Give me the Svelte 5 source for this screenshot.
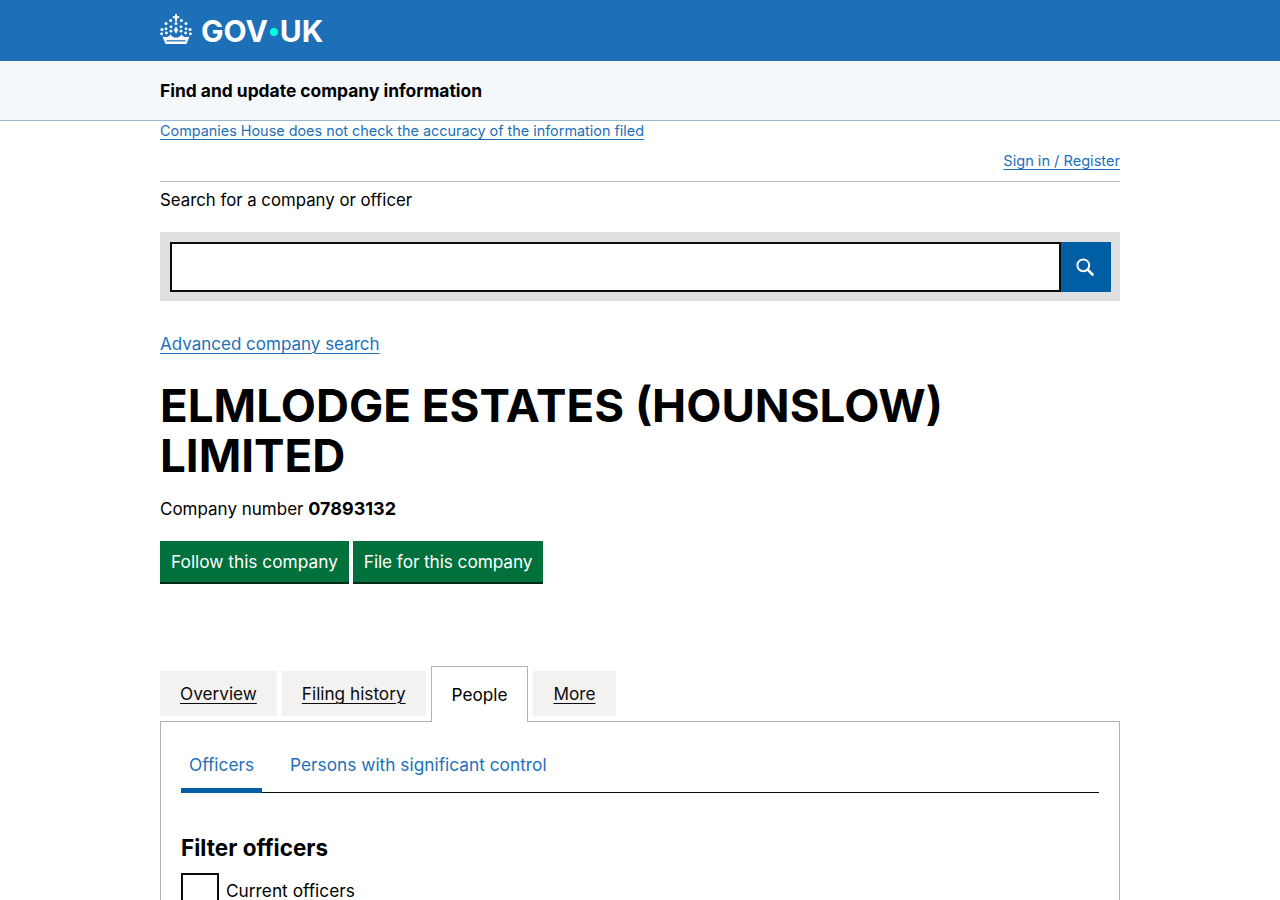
<script>
  const tabs = [
    { label: 'Overview', active: false },
    { label: 'Filing history', active: false },
    { label: 'People', active: true },
    { label: 'More', active: false }
  ];
</script>

<header class="top">
  <div class="wrap logo">
    <svg class="crown" viewBox="0 0 32 30" width="32" height="30" aria-hidden="true">
      <g fill="#fff">
        <path d="M15 0h2v2.200h2.200v2H17v3.200h-2V4.200h-2.200v-2H15z"/>
        <circle cx="16" cy="9.400" r="1.500"/>
        <circle cx="10.600" cy="6.400" r="1.500"/><circle cx="21.400" cy="6.400" r="1.500"/>
        <circle cx="6" cy="9.400" r="1.500"/><circle cx="26" cy="9.400" r="1.500"/>
        <circle cx="2" cy="15.600" r="1.500"/><circle cx="30" cy="15.600" r="1.500"/>
        <circle cx="1.600" cy="19.800" r="1.400"/><circle cx="30.400" cy="19.800" r="1.400"/>
        <circle cx="6" cy="14.800" r="1.400"/><circle cx="26" cy="14.800" r="1.400"/>
        <circle cx="6.400" cy="19" r="1.400"/><circle cx="25.600" cy="19" r="1.400"/>
        <circle cx="11" cy="12.800" r="1.400"/><circle cx="21" cy="12.800" r="1.400"/>
        <circle cx="11" cy="17.200" r="1.400"/><circle cx="21" cy="17.200" r="1.400"/>
        <path d="M16 12.500l2.200 3.200-2.200 4.200-2.200-4.200z"/>
        <path d="M2.500 22.500c3.600 1.400 6.500.3 8-2.300 1 2.500 3 3.300 5.500 3.300s4.500-.8 5.500-3.300c1.500 2.600 4.400 3.700 8 2.300l-3 7.500H5.500z"/>
      </g>
      <path d="M6.500 26.800h19" stroke="#1d70b8" stroke-width="1.200"/>
    </svg>
    <span class="wordmark">GOV<span class="dot"></span>UK</span>
  </div>
</header>

<div class="service">
  <div class="wrap service-name">Find and update company information</div>
</div>

<main class="wrap">
  <a class="link small notice" href="#accuracy">Companies House does not check the accuracy of the information filed</a>
  <nav class="account">
    <a class="link small signin" href="#signin">Sign in / Register</a>
  </nav>

  <form class="search-form" onsubmit={(e) => e.preventDefault()}>
    <label class="search-label" for="site-search">Search for a company or officer</label>
    <div class="search-box">
      <input id="site-search" class="search-input" type="search" />
      <button class="search-button" type="submit" aria-label="Search">
        <svg viewBox="0 0 18 18" width="18" height="18" aria-hidden="true">
          <circle cx="7.300" cy="7.300" r="5.900" fill="none" stroke="#fff" stroke-width="2"/>
          <path d="M11.700 11.700l4.800 4.800" stroke="#fff" stroke-width="2.600" stroke-linecap="round"/>
        </svg>
      </button>
    </div>
  </form>

  <a class="link advanced" href="#advanced">Advanced company search</a>

  <h1>ELMLODGE ESTATES (HOUNSLOW) LIMITED</h1>
  <p class="number">Company number <strong>07893132</strong></p>

  <div class="actions">
    <a class="btn" href="#follow">Follow this company</a>
    <a class="btn" href="#file">File for this company</a>
  </div>

  <ul class="tabs">
    {#each tabs as tab}
      <li class="tab" class:active={tab.active}>
        {#if tab.active}
          <span>{tab.label}</span>
        {:else}
          <a href="#tab">{tab.label}</a>
        {/if}
      </li>
    {/each}
  </ul>

  <section class="panel">
    <ul class="subnav">
      <li class="current"><a href="#officers">Officers</a></li>
      <li><a href="#psc">Persons with significant control</a></li>
    </ul>

    <h2>Filter officers</h2>
    <label class="check">
      <input type="checkbox" />
      <span class="box"></span>
      <span>Current officers</span>
    </label>
  </section>
</main>

<style>
  :global(body) {
    margin: 0;
    background: #fff;
    color: #000;
    font-family: Inter, "Noto Sans", Arial, sans-serif;
  }
  .wrap {
    width: 960px;
    margin: 0 auto;
  }
  .top {
    height: 61px;
    background: #1d70b8;
    color: #fff;
  }
  .logo {
    display: flex;
    align-items: center;
    gap: 9px;
    height: 61px;
  }
  .crown {
    display: block;
    margin-top: -4px;
  }
  .wordmark {
    display: flex;
    align-items: center;
    font-weight: 700;
    font-size: 30px;
    line-height: 1;
  }
  .dot {
    width: 8px;
    height: 8px;
    border-radius: 50%;
    background: #00ffe0;
    margin: 2px 2px 0 2px;
  }
  .service {
    height: 59px;
    background: #f4f8fb;
    border-bottom: 1px solid #9ab7d0;
  }
  .service-name {
    font-weight: 700;
    font-size: 17.400px;
    line-height: 59px;
  }
  .link {
    color: #1d70b8;
    text-decoration: underline;
    text-underline-offset: 3px;
    text-decoration-thickness: 1px;
  }
  .small {
    font-size: 14.400px;
    line-height: 20px;
  }
  .signin {
    font-size: 14.600px;
  }
  .notice {
    display: block;
    height: 20px;
  }
  .account {
    display: flex;
    justify-content: flex-end;
    margin-top: 10px;
    padding-bottom: 10px;
    border-bottom: 1px solid #bfc1c3;
  }
  .search-form {
    display: block;
  }
  .search-label {
    display: block;
    margin-top: 6px;
    font-size: 16.800px;
    line-height: 25px;
  }
  .search-box {
    display: flex;
    box-sizing: border-box;
    height: 69px;
    margin-top: 19px;
    padding: 10px 9px 9px 10px;
    background: #dee0e2;
  }
  .search-input {
    flex: 1;
    box-sizing: border-box;
    min-width: 0;
    height: 50px;
    margin: 0;
    padding: 0 8px;
    border: 2px solid #0b0c0c;
    border-radius: 0;
    background: #fff;
    appearance: none;
    outline: none;
  }
  .search-button {
    display: flex;
    align-items: center;
    justify-content: center;
    width: 50px;
    height: 50px;
    padding: 0 2px 0 0;
    border: 0;
    background: #005ea5;
  }
  .advanced {
    display: block;
    width: fit-content;
    margin-top: 31px;
    font-size: 17px;
    line-height: 25px;
  }
  h1 {
    margin: 24px 0 0;
    font-size: 45.700px;
    font-weight: 700;
    line-height: 50px;
  }
  .number {
    margin: 15px 0 0;
    font-size: 17px;
    line-height: 25px;
  }
  .number strong {
    font-size: 18px;
  }
  .actions {
    display: flex;
    gap: 4px;
    margin-top: 19px;
  }
  .btn {
    box-sizing: border-box;
    height: 43px;
    padding: 0 11px;
    background: #00703c;
    border-bottom: 2px solid #002d18;
    color: #fff;
    font-size: 17.300px;
    line-height: 42px;
    text-decoration: none;
  }
  .btn + .btn {
    letter-spacing: -0.1px;
  }
  .tabs {
    display: flex;
    align-items: flex-end;
    gap: 5px;
    height: 56px;
    margin: 82px 0 0;
    padding: 0;
    list-style: none;
    position: relative;
    z-index: 1;
  }
  .tab {
    box-sizing: border-box;
    height: 45px;
    margin-bottom: 6px;
    padding: 0 20px;
    background: #f3f2f1;
    font-size: 17.200px;
    line-height: 46px;
  }
  .tab a {
    color: #0b0c0c;
    text-decoration: underline;
    text-underline-offset: 3px;
    text-decoration-thickness: 1px;
  }
  .tab.active {
    height: 56px;
    margin-bottom: 0;
    border: 1px solid #b1b4b6;
    border-bottom: 0;
    background: #fff;
    line-height: 55px;
  }
  .panel {
    box-sizing: border-box;
    min-height: 400px;
    margin-top: -1px;
    padding: 20px;
    border: 1px solid #b1b4b6;
  }
  .subnav {
    display: flex;
    gap: 20px;
    margin: 0;
    padding: 0;
    list-style: none;
    border-bottom: 1px solid #0b0c0c;
    font-size: 17.300px;
    line-height: 25px;
  }
  .subnav li {
    padding: 10px 8px 15px;
  }
  .subnav li.current {
    margin-bottom: -1px;
    border-bottom: 5px solid #005ea5;
    padding-bottom: 11px;
  }
  .subnav a {
    color: #1d70b8;
    text-decoration: none;
  }
  h2 {
    margin: 40px 0 0;
    font-size: 22.500px;
    font-weight: 700;
    line-height: 30px;
  }
  .check {
    display: flex;
    gap: 7px;
    margin-top: 10px;
    font-size: 17.300px;
    line-height: 36px;
  }
  .check input {
    position: absolute;
    opacity: 0;
  }
  .box {
    box-sizing: border-box;
    width: 38px;
    height: 38px;
    border: 2px solid #0b0c0c;
    background: #fff;
  }
</style>
